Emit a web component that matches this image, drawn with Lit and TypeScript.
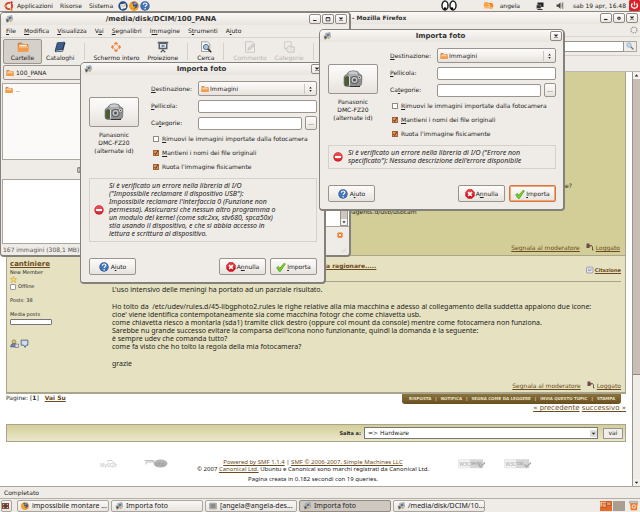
import { LitElement, html, css, svg, nothing } from "lit";
import { customElement, property } from "lit/decorators.js";
import { classMap } from "lit/directives/class-map.js";

const base = css`
  * { box-sizing: border-box; }
  :host { font: 6px/8px "DejaVu Sans", sans-serif; color: #222; }
  button, input, select { font: inherit; color: inherit; margin: 0; padding: 0; border: 0; background: none; border-radius: 0; appearance: none; outline: 0; min-width: 0; }
  button { display: inline-flex; align-items: center; justify-content: center; white-space: nowrap; }
  svg { display: block; flex: none; }
  .titlebar { display: flex; align-items: center; height: 12px; gap: 1px; padding: 0 2px 0 4px; font-weight: bold; font-size: 7px; background: linear-gradient(#faf8f6, #e8e4df); color: #333; }
  .titlebar h1 { flex: 1; margin: 0; font: inherit; text-align: center; white-space: nowrap; }
  .winbtn { width: 12px; height: 10px; border: 1px solid #8f8a84; border-radius: 2px; background: linear-gradient(#fff, #e9e5e1); }
`;

const picture = (name: string, size: number, body: unknown, box = 16) =>
  html`<svg class=${name} width=${size} height=${size} viewBox="0 0 ${box} ${box}" aria-hidden="true">${body}</svg>`;

const folder = (size = 8) => picture("folder", size, svg`
  <path d="M1 14V3q0-1 1-1h4l2 2h6q1 0 1 1v9z" fill="#d9853f"/>
  <path d="M3 5h10v4H3z" fill="#fff3e4"/>
  <path d="M1 14L2 7h14l-1 7z" fill="#f59c4a"/><path d="M2.500 8h12" stroke="#ffd9ae"/>`);
const appMark = (size = 8) => picture("mark", size, svg`
  <path d="M5 3l9-2 1 9-8 2z" fill="#d6d9d2" stroke="#777"/>
  <path d="M7 4l6-1v5l-5 1z" fill="#56799b"/><path d="M1 7h6l2 3-3 5H3z" fill="#9b9b96"/>
  <circle cx="5" cy="11" r="2" fill="#444"/><path d="M10 10l4 2-3 3z" fill="#d5a63a"/>`);
const close = picture("x", 6, svg`<path d="M4 4l8 8M12 4l-8 8" stroke="#222" stroke-width="3"/>`);
const minimize = picture("m", 6, svg`<path d="M3 12h9" stroke="#222" stroke-width="3"/>`);
const maximize = picture("m", 6, svg`<path d="M3 4h10v9H3zM3 5h10" fill="none" stroke="#222" stroke-width="2"/>`);
const restore = picture("m", 6, svg`<path d="M5 6h6v5H5z" fill="none" stroke="#222" stroke-width="2.500"/>`);
const help = (size = 10) => picture("help", size, svg`
  <circle cx="8" cy="8" r="7.500" fill="#2d5a9f"/><circle cx="8" cy="8" r="6.200" fill="#4475b9"/>
  <path d="M5.300 6q.2-2.800 2.900-2.800 2.800 0 2.800 2.300 0 1.400-1.500 2.200-1.200.7-1.200 2" fill="none" stroke="#fff" stroke-width="1.900"/>
  <circle cx="8.200" cy="12.300" r="1.200" fill="#fff"/>`);
const cancel = picture("cancel", 10, svg`
  <path d="M5 .5h6L15.500 5v6L11 15.500H5L.5 11V5z" fill="#cf1520"/><path d="M5.300 2h5.400L14 5.300v3H2v-3z" fill="#e4454a"/>
  <path d="M5 5l6 6M11 5l-6 6" stroke="#fff" stroke-width="2.500"/>`);
const tick = picture("tick", 10, svg`
  <path d="M1 9l3-2 2 3 7-8 2 1-8 12H5z" fill="#73cf2b" stroke="#4b9415"/>`);
const stop = picture("stop", 10, svg`
  <circle cx="8" cy="8" r="7.500" fill="#d8202a"/><circle cx="8" cy="6.500" r="5.500" fill="#e84a4e"/>
  <path d="M3 6.300h10v3.400H3z" fill="#fff"/>`);
const camera = html`<svg width="20" height="18" viewBox="0 0 40 36" aria-hidden="true">
  <path d="M2 15q0-4 5-6l5-6q8-3 17 0l4 5q5 1 5 6l-1 15q-2 4-8 4H8q-6 0-6-5z" fill="#8f9091" stroke="#4d4e50"/>
  <path d="M12 4q8-3 16 0l2 5H11z" fill="#c9cbcc"/><path d="M10 10h22l3 3H8z" fill="#aeb0b1"/>
  <path d="M3 15l6-3 3 2v17l-7 1q-2-2-2-5z" fill="#4d5a36"/><path d="M13 13v18" stroke="#dadbdc" stroke-width="2"/>
  <circle cx="23" cy="20" r="8" fill="#5d5e61"/><circle cx="23" cy="20" r="6" fill="#c4c6c8"/><circle cx="23" cy="20" r="3" fill="#4c4e52"/>
  <circle cx="33" cy="15" r="4" fill="#ddd" stroke="#555"/><circle cx="33" cy="15" r="1.500" fill="#444"/><path d="M14 33h20" stroke="#333" stroke-width="2"/></svg>`;
const firefox = (size = 9) => picture("ff", size, svg`
  <circle cx="8" cy="8" r="7.500" fill="#e07a1c"/><circle cx="8.500" cy="7" r="5" fill="#2f55a0"/>
  <path d="M8 3q3-1 5 1l-3 1-1 2z" fill="#79b3e8"/><path d="M.6 6q1-3 3-4l1 2h3L6 7l2 2 3-.5q-2 4-5 2.500 4 4 9-3-1 8-8 7.500Q.5 14 .6 6z" fill="#f7a21d"/>`);

@customElement("import-dialog")
export class ImportDialog extends LitElement {
  @property() message = "";
  @property({ type: Boolean }) active = false;

  static styles = [base, css`
    :host { display: block; width: 246px; background: #efebe7; border: 1px solid #84807b; border-bottom-width: 2px; border-right-width: 2px; border-radius: 5px 5px 4px 4px; overflow: hidden; }
    .titlebar { padding: 0 1px 0 3px; }
    .body { padding: 6px 7px 7px 8px; display: flex; flex-direction: column; }
    .form { display: grid; grid-template-columns: 50px 1fr; column-gap: 12px; }
    .device { display: flex; flex-direction: column; align-items: center; gap: 4px; padding-top: 16px; text-align: center; }
    .snap { width: 50px; height: 30px; }
    .push { border: 1px solid #99948e; border-radius: 2px; background: linear-gradient(#fdfcfb, #f3f0ed 50%, #e6e1dc); }
    .rows { display: flex; flex-direction: column; gap: 3px; min-width: 0; }
    .row { display: grid; grid-template-columns: 44px 1fr auto; align-items: center; column-gap: 3px; height: 14px; }
    .row.top { height: 15px; }
    .pick { grid-column: 2 / 4; display: flex; align-items: center; height: 15px; padding: 0 2px; gap: 1px; }
    .pick select { flex: 1; }
    .pick svg.arrows { border-left: 1px solid #ccc6c0; padding-left: 2px; }
    .entry { height: 13px; border: 1px solid #99948e; border-radius: 2px; background: #fff; width: 100%; padding: 0 2px; }
    .wide { grid-column: 2 / 4; }
    .dots { width: 12px; height: 14px; }
    .checks { display: flex; flex-direction: column; gap: 4px; padding: 1px 0 0 2px; }
    .checks label { display: flex; align-items: center; gap: 3px; height: 10px; white-space: nowrap; }
    .box { width: 6px; height: 6px; border: 1px solid #8d8984; background: #fff; }
    .box:checked { background: #f08a45; border-color: #a0623c; }
    .check { display: grid; }
    .check > * { grid-area: 1 / 1; }
    .error { display: flex; align-items: center; gap: 5px; margin-top: 6px; padding: 3px 3px 3px 4px; border: 1px solid #d5d0ca; font: italic 7px/8px "Noto Sans", sans-serif; }
    .error p { margin: 0; white-space: pre; }
    .actions { display: flex; gap: 4px; margin-top: 16px; }
    .actions button { width: 47px; height: 17px; gap: 1px; }
    .actions .first { margin-right: auto; gap: 2px; }
    .actions .focus { border-color: #d9743a; box-shadow: inset 0 0 0 1px #eba77d; }
  `];

  private check(label: unknown, on: boolean) {
    return html`<label><span class="check"><input class="box" type="checkbox" .checked=${on}>
      ${on ? picture("v", 6, svg`<path d="M4 8l3 4 6-10" fill="none" stroke="#222" stroke-width="2"/>`) : nothing}</span><span>${label}</span></label>`;
  }

  render() {
    return html`
      <div class="titlebar">${appMark()}<h1>Importa foto</h1><button class="winbtn" aria-label="Chiudi">${close}</button></div>
      <div class="body">
        <div class="form">
          <div class="device"><button class="push snap" aria-label="Fotocamera">${camera}</button>
            <span>Panasonic<br>DMC-FZ20<br>(alternate id)</span></div>
          <div class="rows">
            <div class="row top"><label for="dest"><u>D</u>estinazione:</label>
              <span class="pick push">${folder()}<select id="dest"><option>Immagini</option></select>
              ${picture("arrows", 10, svg`<path d="M5 7l3-4 3 4zM5 10l3 4 3-4z" fill="#222"/>`)}</span></div>
            <div class="row"><label for="roll"><u>P</u>ellicola:</label><input class="entry wide" id="roll"></div>
            <div class="row"><label for="tags">Ca<u>t</u>egorie:</label><input class="entry" id="tags"><button class="push dots">...</button></div>
            <div class="checks">
              ${this.check(html`<u>R</u>imuovi le immagini importate dalla fotocamera`, false)}
              ${this.check(html`<u>M</u>antieni i nomi dei file originali`, true)}
              ${this.check("Ruota l'immagine fisicamente", true)}
            </div>
          </div>
        </div>
        <div class="error">${stop}<p>${this.message}</p></div>
        <div class="actions">
          <button class="push first">${help()}<span>A<u>i</u>uto</span></button>
          <button class="push">${cancel}<span>A<u>n</u>nulla</span></button>
          <button class=${classMap({ push: true, focus: this.active })}>${tick}<span><u>I</u>mporta</span></button>
        </div>
      </div>`;
  }
}

@customElement("photo-window")
export class PhotoWindow extends LitElement {
  static styles = [base, css`
    :host { display: flex; flex-direction: column; background: #efebe7; border: 1px solid #84807b; border-right-width: 2px; border-bottom-width: 2px; border-radius: 4px; overflow: hidden; }
    .menu { display: flex; gap: 8px; height: 12px; padding: 0 5px; align-items: center; }
    .tools { display: flex; align-items: center; height: 28px; border-top: 1px solid #d8d3cd; padding-left: 2px; }
    .tool { flex-direction: column; height: 25px; gap: 1px; padding: 0 3px; border: 1px solid transparent; }
    .on { width: 39px; background: #d6d0ca; border-color: #9b958e; border-radius: 2px; }
    .off { color: #bab5af; }
    .off svg { opacity: .4; }
    .sep { width: 1px; height: 17px; background: #d5d0ca; margin: 0 5px; }
    .place { display: flex; align-items: center; gap: 2px; height: 15px; margin: 0 2px; padding: 0 2px; border: 1px solid #99948e; border-radius: 2px; }
    .list { display: flex; gap: 3px; height: 77px; margin: 3px 1px 0; padding: 2px; background: #fbfaf8; border: 1px solid #aaa59f; }
    .handle { display: flex; align-items: center; height: 19px; padding-left: 76px; }
    .lower { display: flex; justify-content: space-between; }
    .preview { width: 100px; height: 65px; margin-left: 1px; background: #fff; border: 1px solid #aaa59f; }
    .side { display: flex; flex-direction: column; align-items: flex-end; width: 40px; }
    .strip { display: flex; justify-content: flex-end; width: 100%; height: 48px; background: #fff; border-bottom: 1px solid #aaa59f; }
    .bar { display: flex; align-items: flex-end; width: 8px; background: #cdc5be; border: 1px solid #99948e; margin-right: 1px; }
    .drop { margin: 5px 6px 0 0; }
    .status { display: flex; align-items: center; justify-content: space-between; flex: 1; padding: 0 2px; color: #555; }
  `];

  render() {
    const menu = [["", "F", "ile"], ["", "M", "odifica"], ["", "V", "isualizza"], ["V", "a", "i"], ["", "S", "egnalibri"], ["I", "m", "magine"], ["S", "t", "rumenti"], ["A", "i", "uto"]];
    return html`
      <div class="titlebar">${appMark()}<h1>/media/disk/DCIM/100_PANA</h1>
        <button class="winbtn" aria-label="Riduci">${minimize}</button><button class="winbtn" aria-label="Massimizza">${maximize}</button><button class="winbtn" aria-label="Chiudi">${close}</button></div>
      <div class="menu">${menu.map(([a, b, c]) => html`<button><span>${a}<u>${b}</u>${c}</span></button>`)}</div>
      <div class="tools">
        <button class="tool on">${folder(12)}<span>Cartelle</span></button>
        <button class="tool">${picture("book", 12, svg`<path d="M4 2l10-1 1 2-3 11-10 1-1-2z" fill="#23364d"/><path d="M5 2l9-1-3 10-9 1z" fill="#3d5e86"/><path d="M2 13l9-1 1 1-9 1z" fill="#eee"/>`)}<span>Cataloghi</span></button>
        <i class="sep"></i>
        <button class="tool">${picture("full", 12, svg`<path d="M8 1l3 3H5zM8 15l3-3H5zM1 8l3-3v6zM15 8l-3-3v6z" fill="#f08030"/><circle cx="8" cy="8" r="3.500" fill="none" stroke="#e99a62"/>`)}<span>Schermo intero</span></button>
        <button class="tool">${picture("show", 12, svg`<path d="M1 1h14v2H1zM2 3h12v8H2z" fill="#596069"/><path d="M4 4h8v5H4z" fill="#e3e9f0"/><path d="M6 5h4v3H6z" fill="#728faf"/><path d="M8 10v3M5 15l3-3 3 3" fill="none" stroke="#555" stroke-width="1.500"/>`)}<span>Proiezione</span></button>
        <i class="sep"></i>
        <button class="tool">${picture("find", 12, svg`<path d="M2 1h8l3 3v10H2z" fill="#f7f7f7" stroke="#888"/><circle cx="8" cy="8" r="3.500" fill="#a3c6e6" stroke="#456"/><path d="M10.500 10.500L15 15" stroke="#333" stroke-width="2"/>`)}<span>Cerca</span></button>
        <i class="sep"></i>
        <button class="tool off" disabled>${picture("note", 12, svg`<path d="M2 1h9l3 3v11H2z" fill="#eee" stroke="#777"/><path d="M5 12l1-3 6-5 2 2-6 5z" fill="#bbb" stroke="#777"/>`)}<span>Commento</span></button>
        <button class="tool off" disabled>${picture("cat", 12, svg`<path d="M2 1h9v9H2z" fill="#eee" stroke="#888"/><path d="M6 8l3-2 1 2h5v7H7l-3-4z" fill="#ddd" stroke="#777"/>`)}<span>Categorie</span></button>
        <i class="sep"></i>
      </div>
      <div class="place">${folder()}<span>100_PANA</span></div>
      <div class="list">${folder()}<span>..</span></div>
      <div class="handle">${picture("pane", 6, svg`<path d="M2 2h12v12H2zM8 2v12" fill="#eee" stroke="#444" stroke-width="2"/>`)}</div>
      <div class="lower">
        <div class="preview"></div>
        <div class="side">
          <div class="strip"><div class="bar">${picture("down", 6, svg`<path d="M0 0h16v16H0z" fill="#f4f2ef"/><path d="M4 6h8l-4 5z" fill="#222"/>`)}</div></div>
          <button class="drop" aria-label="Rimuovi filtro">${picture("remove", 6, svg`<rect x="1" y="1" width="14" height="14" rx="3" fill="#f0762b"/><path d="M5 5l6 6M11 5l-6 6" stroke="#fff" stroke-width="2.500"/>`)}</button>
        </div>
      </div>
      <div class="status"><span>167 immagini (308,1 MB)</span>${picture("grip", 7, svg`<path d="M15 3L3 15M15 8l-7 7M15 13l-2 2" stroke="#c5bfb8"/>`)}</div>`;
  }
}

@customElement("forum-browser")
export class ForumBrowser extends LitElement {
  static styles = [base, css`
    :host { display: flex; flex-direction: column; background: #efebe7; }
    a { color: #6b4a20; }
    .titlebar { font-size: 6px; }
    .titlebar h1 { text-align: left; padding-left: 348px; }
    .menu { display: flex; align-items: center; justify-content: flex-end; height: 13px; padding-right: 2px; border-bottom: 1px solid #dbd6d0; }
    .nav { display: flex; align-items: center; justify-content: flex-end; height: 19px; padding-right: 3px; border-bottom: 1px solid #d5d0ca; }
    .search { width: 120px; height: 11px; background: #fff; border: 1px solid #99948e; }
    .go { width: 13px; height: 11px; border: 1px solid #aaa59f; border-left: 0; }
    .links { height: 16px; border-bottom: 1px solid #bdb7b0; }
    .view { display: flex; flex: 1; background: #fff; }
    main { flex: 1; min-width: 0; padding: 0 6px; }
    .older { display: flex; flex-direction: column; height: 184px; padding: 110px 5px 4px 6px; background: #d3ce98; border: solid #a8a58c; border-width: 0 1px 1px; }
    .ask { align-self: flex-end; padding-right: 48px; }
    .path { margin-top: 18px; padding-left: 337px; }
    .foot { display: flex; align-items: flex-end; justify-content: flex-end; gap: 6px; margin-top: auto; line-height: 7px; }
    .foot span { display: flex; align-items: flex-end; gap: 2px; }
    .post { display: grid; grid-template-columns: 102px 1fr; height: 138px; padding: 4px 4px 3px 3px; background: #e6e2c1; border: solid #a8a58c; border-width: 0 1px 2px; }
    .who { display: flex; flex-direction: column; align-items: flex-start; font-size: 5px; line-height: 7px; }
    .who .name { font-size: 7px; line-height: 9px; font-weight: bold; }
    .who label { display: flex; align-items: center; gap: 2px; }
    .tick { width: 6px; height: 6px; border: 1px solid #999; background: #fff; border-radius: 1px; }
    .gap { margin-top: 7px; }
    .meter { width: 42px; height: 6px; margin-top: 1px; border: 1px solid #777; background: #fff; border-radius: 1px; }
    .marks { display: flex; gap: 1px; margin-top: 14px; }
    .words { display: flex; flex-direction: column; min-width: 0; }
    .head { display: flex; justify-content: space-between; align-items: flex-start; height: 22px; margin-bottom: 4px; padding-top: 2px; border-bottom: 1px solid #a8a58c; font-weight: bold; }
    .head .title { padding-left: 214px; }
    .quote { display: flex; align-items: center; font-size: 5px; padding-top: 4px; gap: 1px; }
    .words p { margin: 0 0 9px; white-space: pre; font: 7px/8px "Noto Sans", sans-serif; }
    .under { display: flex; justify-content: space-between; align-items: flex-start; height: 30px; }
    .under .where a { margin-left: 4px; font-weight: bold; }
    .right { display: flex; flex-direction: column; align-items: flex-end; }
    .strip { display: flex; align-items: center; margin-right: 5px; height: 10px; padding: 0 6px 0 7px; gap: 4px; font-size: 4px; font-weight: bold; color: #e9e2c4; background: linear-gradient(#8a7440, #6a4f1d); border-radius: 0 0 3px 3px; }
    .strip a { color: inherit; text-decoration: none; }
    .pager { color: #6b4a20; font-size: 7px; }
    .jump { display: flex; align-items: center; justify-content: flex-end; gap: 3px; height: 18px; padding: 0 2px; border: 1px solid #a8a58c; background: linear-gradient(#d3ce98, #ebe8cd); }
    .jump label { font-size: 5px; font-weight: bold; }
    .combo { display: flex; align-items: center; width: 234px; height: 12px; background: #fff; border: 1px solid #777; padding-left: 3px; }
    .combo select { flex: 1; }
    .vai { width: 20px; height: 11px; margin-left: 2px; background: #f1efec; border: 1px solid #99948e; }
    footer { display: flex; align-items: flex-start; justify-content: center; padding-top: 17px; gap: 29px; font: 6px/7px "Noto Sans", sans-serif; text-align: center; }
    footer p { margin: 0 0 3px; }
    footer .mid { white-space: nowrap; }
    .logos { display: flex; gap: 18px; }
    .logos.first { gap: 26px; }
    .bar { display: flex; flex-direction: column; width: 8px; background: #c9beb5; border-left: 1px solid #99948e; }
    .arrow { width: 7px; height: 7px; background: #f4f2ef; }
    .thumb { height: 105px; margin-top: auto; background: #efebe7; border-top: 1px solid #8f8a84; }
    .state { display: flex; align-items: center; height: 12px; padding: 0 4px; border-top: 1px solid #aaa59f; }
  `];

  private moderation() {
    return html`<div class="foot"><a href="#">Segnala al moderatore</a><span>${picture("log", 8, svg`<path d="M1 1h6v9H1z" fill="#555"/><path d="M6 5h5l2 3v6h2" fill="none" stroke="#333" stroke-width="1.500"/><path d="M6 4h3v4H6z" fill="#c33"/>`)}<a href="#">Loggato</a></span></div>`;
  }

  private w3c(kind: unknown) {
    return html`<svg width="28" height="10" viewBox="0 0 56 20" role="img" aria-label="Validatore"><path d="M1 1h49v17H1z" fill="#f1f1f1" stroke="#ddd"/><path d="M24 1h26v17H24z" fill="#d6d6d6"/><text x="3" y="14" font-size="10" fill="#aaa">W3C</text><text x="26" y="11" font-size="7" fill="#888">${kind}</text><path d="M41 11l4 5 9-9" fill="none" stroke="#aaa" stroke-width="3"/></svg>`;
  }

  render() {
    const bar = ["RISPOSTA", "NOTIFICA", "SEGNA COME DA LEGGERE", "INVIA QUESTO TOPIC", "STAMPA"];
    return html`
      <div class="titlebar"><h1>- Mozilla Firefox</h1><button class="winbtn" aria-label="Riduci">${minimize}</button><button class="winbtn" aria-label="Ripristina">${restore}</button><button class="winbtn" aria-label="Chiudi">${close}</button></div>
      <div class="menu">${picture("busy", 8, svg`<circle cx="8" cy="8" r="6" fill="none" stroke="#9a9a9a" stroke-width="2.500" stroke-dasharray="3 1.700"/>`)}</div>
      <div class="nav"><input class="search" aria-label="Cerca"><button class="go" aria-label="Vai">${picture("lens", 8, svg`<circle cx="6" cy="6" r="4.500" fill="#bcd9f0" stroke="#6f92b4"/><path d="M9.500 9.500L15 15" stroke="#777" stroke-width="2.500"/>`)}</button></div>
      <div class="links"></div>
      <div class="view">
        <main>
          <article class="older"><span class="ask">e?</span><span class="path">/agents.d/usb/usbcam</span>${this.moderation()}</article>
          <article class="post">
            <div class="who">
              <a class="name" href="#">cantiniere</a><span>New Member</span>
              ${picture("star", 7, svg`<path d="M8 1l2 5h5l-4 3 2 6-5-4-5 4 2-6-4-3h5z" fill="#fbe26a" stroke="#c78a1c"/>`)}
              <label><input class="tick" type="checkbox">Offline</label>
              <span class="gap">Posts: 38</span><span class="gap">Media posts</span><div class="meter"></div>
              <div class="marks">${picture("user", 9, svg`<circle cx="7" cy="5" r="3.500" fill="#e8c267" stroke="#665"/><path d="M1 14q0-6 6-6t6 6z" fill="#6c8fc0" stroke="#445"/><path d="M9 9h6v6H9z" fill="#dde" stroke="#557"/>`)}${picture("talk", 9, svg`<path d="M2 2h12v9h-3l-2 4-2-4H2z" fill="#cfdcf0" stroke="#445a80" stroke-width="1.500"/>`)}</div>
            </div>
            <div class="words">
              <div class="head"><a class="title" href="#">a ragionare.....</a><span class="quote">${picture("q", 8, svg`<rect x="1" y="2" width="13" height="12" rx="2" fill="#dfe3ee" stroke="#667"/><path d="M4 6h3M9 6h3M4 9h6" stroke="#558"/>`)}<a href="#">Citazione</a></span></div>
              <p>L'uso intensivo delle meningi ha portato ad un parziale risultato.</p>
              <p>${"Ho tolto da  /etc/udev/rules.d/45-libgphoto2.rules le righe relative alla mia macchina e adesso al collegamento della suddetta appaiono due icone:\ncioe' viene identifica contempotaneamente sia come macchina fotogr che come chiavetta usb.\ncome chiavetta riesco a montarla (sda1) tramite click destro (oppure col mount da console) mentre come fotocamera non funziona.\nSarebbe nu grande successo evitare la comparsa dell'icona nono funzionante, quindi la domanda è la seguente:\nè sempre udev che comanda tutto?\ncome fa visto che ho tolto la regola della mia fotocamera?"}</p>
              <p>grazie</p>
              ${this.moderation()}
            </div>
          </article>
          <div class="under"><span class="where">Pagine: [<b>1</b>] <a href="#">Vai Su</a></span>
            <div class="right"><nav class="strip">${bar.map((t, i) => html`${i ? html`<span>|</span>` : nothing}<a href="#">${t}</a>`)}</nav>
            <div class="pager"><a href="#">« precedente</a> <a href="#">successivo »</a></div></div></div>
          <div class="jump"><label for="jump">Salta a:</label><span class="combo"><select id="jump"><option>=&gt; Hardware</option></select>${picture("down", 7, svg`<path d="M0 0h16v16H0z" fill="#ddd"/><path d="M4 6h8l-4 5z" fill="#222"/>`)}</span><button class="vai">vai</button></div>
          <footer>
            <div class="logos first">
            <svg width="18" height="9" viewBox="0 0 36 18" role="img" aria-label="MySQL"><text x="0" y="15" font-size="10" fill="#bbb">MySQL</text><path d="M14 5q9-6 14 3l6 5" fill="none" stroke="#ccc" stroke-width="2"/></svg>
            <svg width="24" height="9" viewBox="0 0 48 18" role="img" aria-label="PHP"><ellipse cx="33" cy="9" rx="14" ry="8" fill="#b4b4b4"/><path d="M1 3h18v3H4v5" fill="none" stroke="#bbb" stroke-width="2"/><text x="23" y="13" font-size="10" fill="#999">php</text></svg>
            </div>
            <div class="mid"><a href="#">Powered by SMF 1.1.4</a> | <a href="#">SMF © 2006-2007, Simple Machines LLC</a><p>© 2007 <a href="#">Canonical Ltd.</a> Ubuntu e Canonical sono marchi registrati da Canonical Ltd.</p><p>Pagina creata in 0.182 secondi con 19 queries.</p></div>
            <div class="logos">${this.w3c("XHTML")}${this.w3c("CSS")}</div>
          </footer>
        </main>
        <div class="bar"><div class="arrow">${picture("up", 7, svg`<path d="M4 10h8L8 5z" fill="#222"/>`)}</div><div class="thumb"></div><div class="arrow">${picture("dn", 7, svg`<path d="M4 6h8l-4 5z" fill="#222"/>`)}</div></div>
      </div>
      <div class="state">Completato</div>`;
  }
}

@customElement("app-root")
export class AppRoot extends LitElement {
  static styles = [base, css`
    :host { display: flex; flex-direction: column; min-height: 100vh; position: relative; overflow: hidden; background: #efebe7; }
    .panel { display: flex; align-items: center; height: 12px; padding-left: 4px; gap: 7px; border-bottom: 1px solid #8d867f; }
    .launch { display: flex; gap: 1px; margin-left: -2px; }
    .brand { gap: 3px; }
    .tray { display: flex; align-items: center; gap: 8px; margin-left: auto; }
    .tray svg.eyes { margin-right: 18px; }
    .tray .who { display: flex; gap: 6px; align-items: center; margin-right: 8px; }
    .tray svg.net { margin-right: 4px; }
    .clock { display: flex; gap: 3px; align-items: center; }
    forum-browser { flex: 1; }
    .window { position: absolute; }
    .photos { left: 0; top: 12px; width: 351px; height: 245px; }
    .one { left: 80px; top: 62px; }
    .two { left: 319px; top: 29px; }
    .tasks { display: flex; align-items: center; height: 14px; gap: 2px; padding: 0 1px; border-top: 1px solid #b5aea7; font: 7px/8px "Noto Sans", sans-serif; }
    .task { width: 92px; height: 12px; justify-content: flex-start; gap: 3px; padding: 0 3px; border: 1px solid #aaa59f; border-radius: 2px; background: linear-gradient(#faf8f7, #e8e4df); }
    .down { background: #cfc8c1; border-color: #8f8a84; }
    .desk { width: 11px; padding: 0; justify-content: center; margin-right: 3px; }
    .tail { display: flex; margin-left: auto; gap: 1px; align-items: center; }
    .space { width: 12px; height: 10px; background: #aa9d92; }
    .trash { margin-left: 2px; }
  `];

  render() {
    const shell = picture("shell", 8, svg`<rect x="1" y="2" width="14" height="12" rx="1" fill="#bbb" stroke="#888"/><path d="M3 4h10v8H3z" fill="#8b8b86"/>`);
    const tasks = [
      { icon: firefox(8), text: "impossibile montare ...", on: false },
      { icon: appMark(), text: "Importa foto", on: false },
      { icon: shell, text: "[angela@angela-des...", on: false },
      { icon: appMark(), text: "Importa foto", on: true },
      { icon: appMark(), text: "/media/disk/DCIM/10...", on: false },
    ];
    return html`
      <header class="panel">
        <button class="brand">${picture("ubuntu", 10, svg`<circle cx="8" cy="8" r="5" fill="none" stroke="#d7452b" stroke-width="3"/><path d="M8 8L1 8M8 8l4-7M8 8l4 7" stroke="#efebe7" stroke-width="1.500"/><circle cx="1.800" cy="8" r="1.800" fill="#e8872b"/><circle cx="12" cy="2" r="1.800" fill="#c22a22"/><circle cx="12" cy="14" r="1.800" fill="#e8872b"/>`)}Applicazioni</button>
        <button>Risorse</button><button>Sistema</button>
        <span class="launch">${picture("mail", 10, svg`<circle cx="8" cy="8" r="7.500" fill="#234a86"/><path d="M3 5l9-1 1 7-8 2z" fill="#f4f0dd"/><path d="M3 5l6 4 3-5" fill="none" stroke="#999"/><path d="M1 10q5 6 12 3l-5 3z" fill="#3f7cc4"/>`)}${firefox(10)}${help(10)}</span>
        <span class="tray">
          <svg class="eyes" width="16" height="11" viewBox="0 0 32 22" aria-hidden="true"><g fill="#fff" stroke="#222" stroke-width="3"><ellipse cx="8" cy="11" rx="6" ry="9"/><ellipse cx="24" cy="11" rx="6" ry="9"/></g><circle cx="8" cy="17" r="2.500"/><circle cx="22" cy="17" r="2.500"/></svg>
          <span class="who">${picture("user", 11, svg`<circle cx="5" cy="7" r="4" fill="#f7a540"/><circle cx="11" cy="8" r="4" fill="#f08a2c"/><path d="M2 11h8l4 1" stroke="#f7b86a" stroke-width="3"/><path d="M7 6l3 2-3 2" fill="none" stroke="#fff"/>`)}angela</span>
          ${picture("net", 8, svg`<path d="M3 1h12v9H3z" fill="#222"/><path d="M1 6h9v7H1z" fill="#333" stroke="#bbb"/><path d="M3 15h10" stroke="#333" stroke-width="2"/>`)}
          ${picture("volume", 9, svg`<path d="M1 6h3l4-4v12l-4-4H1z" fill="#444"/><path d="M10 5q2 3 0 6M12 2v12" fill="none" stroke="#666" stroke-width="1.500"/>`)}
          <span class="clock">sab 19 apr, 16.48 ${picture("power", 11, svg`<rect width="16" height="16" rx="2" fill="#dc2027"/><path d="M5 5q-3 3 0 6 3 2 6 0 3-3 0-6M8 2v6" fill="none" stroke="#fff" stroke-width="1.800"/>`)}</span>
        </span>
      </header>
      <forum-browser></forum-browser>
      <photo-window class="window photos"></photo-window>
      <import-dialog class="window one" .message=${"Si è verificato un errore nella libreria di I/O\n(\"Impossibile reclamare il dispositivo USB\"):\nImpossibile reclamare l'interfaccia 0 (Funzione non\npermessa). Assicurarsi che nessun altro programma o\nun modulo del kernel (come sdc2xx, stv680, spca50x)\nstia usando il dispositivo, e che si abbia accesso in\nlettura e scrittura al dispositivo."}></import-dialog>
      <import-dialog class="window two" active .message=${"Si è verificato un errore nella libreria di I/O (\"Errore non\nspecificato\"): Nessuna descrizione dell'errore disponibile"}></import-dialog>
      <footer class="tasks">
        <button class="task desk" aria-label="Mostra scrivania">${picture("desk", 8, svg`<path d="M1 2h14v12H1z" fill="#8a4632"/><path d="M3 4l10 8M13 4L3 12" stroke="#e9c9b3" stroke-width="2"/><path d="M5 5h6v6H5z" fill="#40434a"/>`)}</button>
        ${tasks.map((t) => html`<button class=${classMap({ task: true, down: t.on })}>${t.icon}<span>${t.text}</span></button>`)}
        <span class="tail"><svg width="12" height="10" viewBox="0 0 24 20" aria-hidden="true"><path d="M0 0h24v20H0z" fill="#e66a2c"/><path d="M1 2h13v9H1z" fill="#f6d9c0"/><path d="M4 4h9v9H4zM13 2h9v7h-9z" fill="#ef9a5c" stroke="#8f3d16"/></svg><i class="space"></i>
          ${picture("trash", 11, svg`<path d="M3 4h11l-1 11H4z" fill="#f07a2a"/><path d="M2 2h12v2.500H2z" fill="#d9d5d0" stroke="#999"/><circle cx="8.500" cy="9.500" r="2.500" fill="none" stroke="#fff" stroke-width="1.200"/>`)}</span>
      </footer>`;
  }
}
